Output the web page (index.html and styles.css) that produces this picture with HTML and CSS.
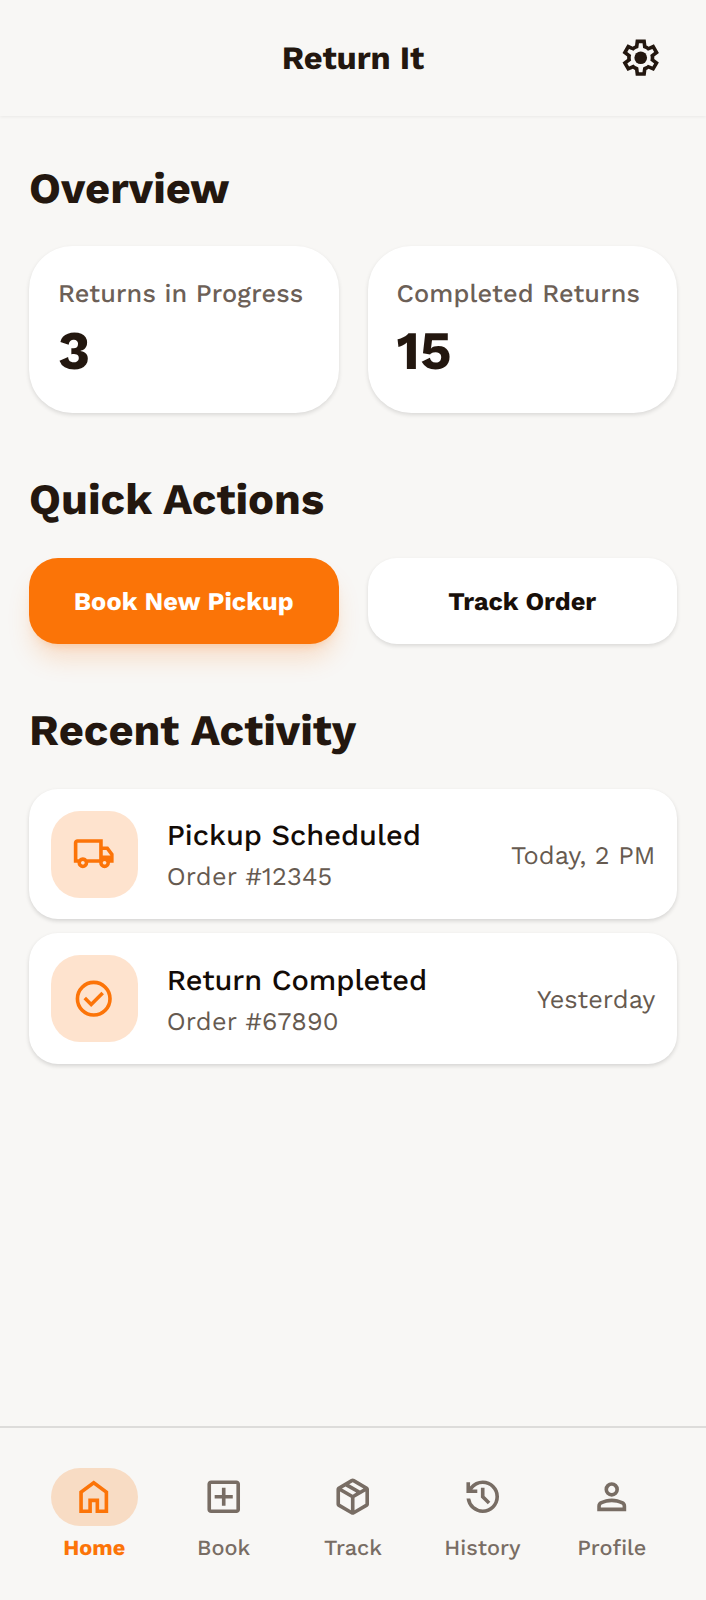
FILE: index.html
```html
<!DOCTYPE html>
<html lang="en">
<head>
<meta charset="utf-8">
<title>Return It</title>
<link rel="stylesheet" href="styles.css">
</head>
<body>
<div class="app">
  <header class="header">
    <h1 class="title">Return It</h1>
    <svg class="icon settings" viewBox="0 -960 960 960"><path d="m370-80-16-128q-13-5-24.500-12T307-235l-119 50L78-375l103-78q-1-7-1-13.500v-27q0-6.500 1-13.500L78-585l110-190 119 50q11-8 23-15t24-12l16-128h220l16 128q13 5 24.500 12t22.500 15l119-50 110 190-103 78q1 7 1 13.500v27q0 6.500-2 13.500l103 78-110 190-118-50q-11 8-23 15t-24 12L590-80H370Zm70-80h79l14-106q31-8 57.500-23.500T639-327l99 41 39-68-86-65q5-14 7-29.500t2-31.500q0-16-2-31.500t-7-29.500l86-65-39-68-99 42q-22-23-48.500-38.500T533-694l-13-106h-79l-14 106q-31 8-57.500 23.500T321-633l-99-41-39 68 86 64q-5 15-7 30t-2 32q0 16 2 31t7 30l-86 65 39 68 99-42q22 23 48.500 38.500T427-266l13 106Z"/><circle cx="480" cy="-480" r="140"/></svg>
  </header>
  <main class="main">
    <h2 class="heading">Overview</h2>
    <div class="pair">
      <div class="stat"><p class="stat-label">Returns in Progress</p><p class="stat-value">3</p></div>
      <div class="stat"><p class="stat-label">Completed Returns</p><p class="stat-value">15</p></div>
    </div>
    <h2 class="heading heading-next">Quick Actions</h2>
    <div class="pair">
      <button class="button primary">Book New Pickup</button>
      <button class="button">Track Order</button>
    </div>
    <h2 class="heading heading-next">Recent Activity</h2>
    <div class="list">
      <div class="item">
        <div class="tile"><svg class="icon" viewBox="0 -960 960 960"><path d="M240-160q-50 0-85-35t-35-85H40v-440q0-33 23.500-56.500T120-800h560v160h120l120 160v200h-80q0 50-35 85t-85 35q-50 0-85-35t-35-85H360q0 50-35 85t-85 35Zm0-80q17 0 28.500-11.500T280-280q0-17-11.500-28.500T240-320q-17 0-28.500 11.500T200-280q0 17 11.500 28.500T240-240ZM120-360h32q17-18 39-29t49-11q27 0 49 11t39 29h272v-360H120v360Zm600 120q17 0 28.500-11.500T760-280q0-17-11.500-28.500T720-320q-17 0-28.500 11.500T680-280q0 17 11.500 28.500T720-240Zm-40-200h170l-90-120h-80v120Z"/></svg></div>
        <div class="item-text"><p class="item-title">Pickup Scheduled</p><p class="item-sub">Order #12345</p></div>
        <p class="item-time">Today, 2 PM</p>
      </div>
      <div class="item">
        <div class="tile"><svg class="icon" viewBox="0 -960 960 960"><path d="m424-296 282-282-56-56-226 226-114-114-56 56 170 170Z"/><circle class="ring" cx="480" cy="-480" r="360"/></svg></div>
        <div class="item-text"><p class="item-title">Return Completed</p><p class="item-sub">Order #67890</p></div>
        <p class="item-time">Yesterday</p>
      </div>
    </div>
  </main>
  <nav class="nav">
    <a class="tab active"><div class="pill"><svg class="icon" viewBox="0 -960 960 960"><path d="M240-200h120v-240h240v240h120v-360L480-740 240-560v360Zm-80 80v-480l320-240 320 240v480H520v-240h-80v240H160Z"/></svg></div><span>Home</span></a>
    <a class="tab"><div class="pill"><svg class="icon" viewBox="0 -960 960 960"><path d="M440-280h80v-160h160v-80H520v-160h-80v160H280v80h160v160ZM200-120q-33 0-56.500-23.500T120-200v-560q0-33 23.500-56.500T200-840h560q33 0 56.500 23.500T840-760v560q0 33-23.500 56.500T760-120H200Zm0-80h560v-560H200v560Z"/></svg></div><span>Book</span></a>
    <a class="tab"><div class="pill"><svg class="icon" viewBox="0 -960 960 960"><path d="M440-183v-274L200-596v274l240 139Zm80 0 240-139v-274L520-457v274Zm-80 92L160-252q-19-11-29.500-29T120-321v-318q0-22 10.500-40t29.500-29l280-161q19-11 40-11t40 11l280 161q19 11 29.500 29t10.500 40v318q0 22-10.500 40T800-252L520-91q-19 11-40 11t-40-11Zm200-528 77-44-237-137-78 45 238 136Zm-160 93 78-45-237-137-78 45 237 137Z"/></svg></div><span>Track</span></a>
    <a class="tab"><div class="pill"><svg class="icon" viewBox="0 -960 960 960"><path d="M480-120q-138 0-240.500-91.500T122-440h82q14 104 92.500 172T480-200q117 0 198.500-81.500T760-480q0-117-81.500-198.500T480-760q-69 0-129 32t-101 88h110v80H120v-240h80v94q51-64 124.500-99T480-840q75 0 140.500 28.500t114 77q48.500 48.500 77 114T840-480q0 75-28.500 140.500t-77 114q-48.500 48.500-114 77T480-120Zm112-192L440-464v-216h80v184l128 128-56 56Z"/></svg></div><span>History</span></a>
    <a class="tab"><div class="pill"><svg class="icon" viewBox="0 -960 960 960"><path d="M480-480q-66 0-113-47t-47-113q0-66 47-113t113-47q66 0 113 47t47 113q0 66-47 113t-113 47ZM160-160v-112q0-34 17.500-62.500T224-378q62-31 126-46.500T480-440q66 0 130 15.500T736-378q29 15 46.500 43.500T800-272v112H160Zm80-80h480v-32q0-11-5.500-20T700-306q-54-27-109-40.500T480-360q-56 0-111 13.500T260-306q-9 5-14.500 14t-5.500 20v32Zm240-320q33 0 56.500-23.500T560-640q0-33-23.500-56.500T480-720q-33 0-56.500 23.500T400-640q0 33 23.500 56.500T480-560Z"/></svg></div><span>Profile</span></a>
  </nav>
</div>
</body>
</html>
```
FILE: styles.css
```css
* { box-sizing: border-box; margin: 0; padding: 0; }
body { background: #f8f7f5; color: #23170f; font-family: "Work Sans", Inter, sans-serif; text-rendering: geometricPrecision; }
.app { display: flex; flex-direction: column; height: 1600px; }
.icon { width: 43.450px; height: 43.450px; fill: currentColor; flex: none; display: block; }
.ring { fill: none; stroke: currentColor; stroke-width: 80; }
.header { height: 116px; flex: none; display: grid; grid-template-columns: 87px 1fr 87px; align-items: center; padding: 0 21.700px; box-shadow: 0 1px 3px rgba(0,0,0,.06); }
.title { grid-column: 2; text-align: center; font-size: 32.600px; line-height: 40px; font-weight: 700; letter-spacing: -.1px; }
.settings { justify-self: center; }
.main { flex: 1; padding: 45px 29px 0; }
.heading { font-size: 43.450px; line-height: 54px; font-weight: 700; padding-top: 1px; margin-bottom: 30px; }
.pair { display: grid; grid-template-columns: 1fr 1fr; gap: 29px; }
.stat { height: 167px; padding: 29px; border-radius: 43.400px; background: #fff; box-shadow: 0 2px 4px rgba(0,0,0,.12); }
.stat-label { font-size: 25.340px; line-height: 38px; font-weight: 500; letter-spacing: .15px; color: #6c6057; white-space: nowrap; }
.stat-value { font-size: 54.300px; line-height: 65px; margin-top: 6px; font-weight: 700; }
.heading-next { margin-top: 59px; margin-bottom: 30.500px; }
.button { height: 86.500px; border: 0; border-radius: 29px; background: #fff; color: #180f09; font: 700 25.340px "Work Sans", Inter, sans-serif; padding-top: 2px; box-shadow: 0 2px 4px rgba(0,0,0,.12); text-rendering: inherit; }
.primary { background: #fb7407; color: #fff; letter-spacing: .1px; box-shadow: 0 18px 27px -5px rgba(252,116,8,.2), 0 7px 11px -7px rgba(252,116,8,.3); }
.list { display: grid; gap: 14.500px; }
.item { height: 130.300px; display: flex; align-items: center; gap: 29px; padding: 1px 21.700px 0; border-radius: 29px; background: #fff; box-shadow: 0 2px 4px rgba(0,0,0,.14); }
.tile { width: 87px; height: 87px; border-radius: 29px; display: grid; place-items: center; background: #fee3ce; color: #fc7408; flex: none; }
.item-text { flex: 1; padding-top: 3px; }
.item-title { font-size: 28.970px; line-height: 43px; font-weight: 500; color: #130b06; }
.item-sub, .item-time { font-size: 25.340px; line-height: 38px; color: #665a50; }
.item-sub { letter-spacing: .2px; }
.item-time { padding-top: 3px; }
.nav { height: 174px; flex: none; display: grid; grid-template-columns: repeat(5, 1fr); padding: 40px 29.500px 0; border-top: 2px solid #dddcda; }
.tab { display: flex; flex-direction: column; align-items: center; font-size: 21.720px; line-height: 30px; font-weight: 500; color: #786d64; }
.pill { width: 87px; height: 58px; display: grid; place-items: center; border-radius: 29px; margin-bottom: 7.500px; }
.active { color: #fc7408; font-weight: 700; }
.active .pill { background: #f8dcc4; }
```
